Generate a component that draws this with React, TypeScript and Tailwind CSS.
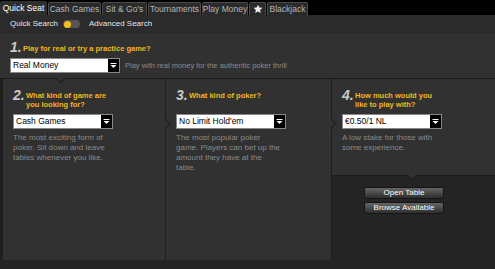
import React from 'react';

const tabs: [string, string][] = [
  ['Quick Seat', 'w-[47px]'],
  ['Cash Games', 'w-[53px]'],
  ["Sit & Go's", 'w-[45px]'],
  ['Tournaments', 'w-[53px]'],
  ['Play Money', 'w-[46px]'],
];

const Caret = () => (
  <span className="flex h-full w-[11px] items-center justify-center bg-black">
    <svg width="7" height="6" viewBox="0 0 7 6">
      <rect x="0.5" y="0" width="6" height="1" fill="#fff" />
      <path d="M0.5 2 H6.5 L3.5 5 Z" fill="#fff" />
    </svg>
  </span>
);

const Select = ({ value, width }: { value: string; width: string }) => (
  <div className={`flex h-[15px] shrink-0 items-center border border-[#888] bg-white ${width}`}>
    <span className="flex-1 truncate pl-[2px] text-[8.5px] leading-none text-black">{value}</span>
    <Caret />
  </div>
);

const Num = ({ n }: { n: string }) => (
  <span className="block w-[13px] text-[14px] font-bold italic leading-[14px] text-[#c9c9c9]">{n}</span>
);

const Heading = ({ children }: { children: React.ReactNode }) => (
  <div className="text-[7.5px] font-bold leading-[9px] text-[#f2b71b]">{children}</div>
);

const Desc = ({ children }: { children: React.ReactNode }) => (
  <p className="mt-[4px] text-[8px] leading-[10px] text-[#8a8a8a]">{children}</p>
);

const Step = ({
  n,
  title,
  value,
  selWidth,
  desc,
}: {
  n: string;
  title: React.ReactNode;
  value: string;
  selWidth: string;
  desc: React.ReactNode;
}) => (
  <div className="flex h-full flex-col px-[10px] pt-[9px]">
    <div className="flex h-[26px] items-start">
      <Num n={n} />
      <div className="pt-[3px]">
        <Heading>{title}</Heading>
      </div>
    </div>
    <Select value={value} width={selWidth} />
    <Desc>{desc}</Desc>
  </div>
);

// small notch where a panel border points into its neighbour
const NotchDown = ({ left }: { left: string }) => (
  <span className={`absolute bottom-[-4px] h-[7px] w-[7px] rotate-45 border-b border-r border-[#1c1c1c] bg-[#313131] ${left}`} />
);
const NotchRight = () => (
  <span className="absolute right-[-4px] top-[41px] h-[7px] w-[7px] rotate-45 border-r border-t border-[#1c1c1c] bg-[#313131]" />
);

export default function App() {
  return (
    <div className="flex h-[269px] w-[495px] flex-col overflow-hidden bg-[#242424] leading-none [font-family:'Liberation_Sans',Arial,sans-serif]">
      {/* tabs */}
      <div className="flex h-[15px] items-end gap-[1px] bg-black">
        {tabs.map(([t, w], i) => (
          <div
            key={t}
            className={
              i === 0
                ? `flex h-[14px] items-center justify-center whitespace-nowrap rounded-t-[2px] bg-[#2e2e2e] text-[8.5px] text-white ${w}`
                : `flex h-[13px] items-center justify-center whitespace-nowrap rounded-t-[2px] border border-b-0 border-[#4a4a4a] bg-[#2a2a2a] text-[8.5px] text-[#b5b5b5] ${w}`
            }
          >
            {t}
          </div>
        ))}
        <div className="flex h-[13px] w-[17px] items-center justify-center rounded-t-[2px] border border-b-0 border-[#4a4a4a] bg-[#2a2a2a]">
          <svg width="10" height="10" viewBox="0 0 24 24">
            <path d="M12 1.5l3.2 7 7.6.7-5.8 5.1 1.8 7.5L12 17.8l-6.8 4 1.8-7.5L1.2 9.2l7.6-.7z" fill="#eee" />
          </svg>
        </div>
        <div className="flex h-[13px] w-[41px] items-center justify-center whitespace-nowrap rounded-t-[2px] border border-b-0 border-[#4a4a4a] bg-[#2a2a2a] text-[8.5px] text-[#b5b5b5]">
          Blackjack
        </div>
      </div>

      {/* quick / advanced */}
      <div className="flex h-[18px] items-center bg-[#2b2b2b] pl-[10px] text-[8px] text-[#e6e6e6]">
        <span className="whitespace-nowrap">Quick Search</span>
        <span className="ml-[5px] flex h-[8px] w-[17px] items-center rounded-full bg-[#555] pl-[1px]">
          <span className="h-[7px] w-[7px] rounded-full bg-[#f5c21b]" />
        </span>
        <span className="ml-[9px] whitespace-nowrap">Advanced Search</span>
      </div>

      {/* step 1 */}
      <div className="relative z-10 h-[46px] shrink-0 border-b border-[#1c1c1c] bg-[#313131] px-[10px] pt-[7px]">
        <div className="flex items-center">
          <Num n="1." />
          <div className="pt-[2px]">
            <Heading>Play for real or try a practice game?</Heading>
          </div>
        </div>
        <div className="mt-[4px] flex items-center gap-[5px]">
          <Select value="Real Money" width="w-[110px]" />
          <span className="whitespace-nowrap text-[7.5px] text-[#8a8a8a]">
            Play with real money for the authentic poker thrill
          </span>
        </div>
        <NotchDown left="left-[57px]" />
      </div>

      {/* steps 2-4 */}
      <div className="flex flex-1">
        <div className="relative z-[2] h-[181px] w-[166px] border-l-[3px] border-r border-[#1f1f1f] bg-[#313131]">
          <Step
            n="2."
            title={<>What kind of game are<br />you looking for?</>}
            value="Cash Games"
            selWidth="w-[100px]"
            desc={<>The most exciting form of<br />poker. Sit down and leave<br />tables whenever you like.</>}
          />
          <NotchRight />
        </div>
        <div className="relative z-[1] h-[181px] w-[166px] border-r border-[#1f1f1f] bg-[#313131]">
          <Step
            n="3."
            title="What kind of poker?"
            value="No Limit Hold'em"
            selWidth="w-[110px]"
            desc={<>The most popular poker<br />game. Players can bet up the<br />amount they have at the<br />table.</>}
          />
          <NotchRight />
        </div>
        <div className="flex flex-1 flex-col">
          <div className="relative h-[97px] border-b border-[#1c1c1c] bg-[#313131]">
            <Step
              n="4."
              title={<>How much would you<br />like to play with?</>}
              value="€0.50/1 NL"
              selWidth="w-[100px]"
              desc={<>A low stake for those with<br />some experience.</>}
            />
            <NotchDown left="left-[77px]" />
          </div>
          <div className="flex flex-col items-start gap-[3px] pl-[32px] pt-[11px]">
            {['Open Table', 'Browse Available'].map((b) => (
              <button
                key={b}
                className="flex h-[12px] w-[80px] items-center justify-center rounded-[2px] border border-[#151515] bg-gradient-to-b from-[#666] to-[#2e2e2e] text-[8px] text-white"
              >
                {b}
              </button>
            ))}
          </div>
        </div>
      </div>
    </div>
  );
}
